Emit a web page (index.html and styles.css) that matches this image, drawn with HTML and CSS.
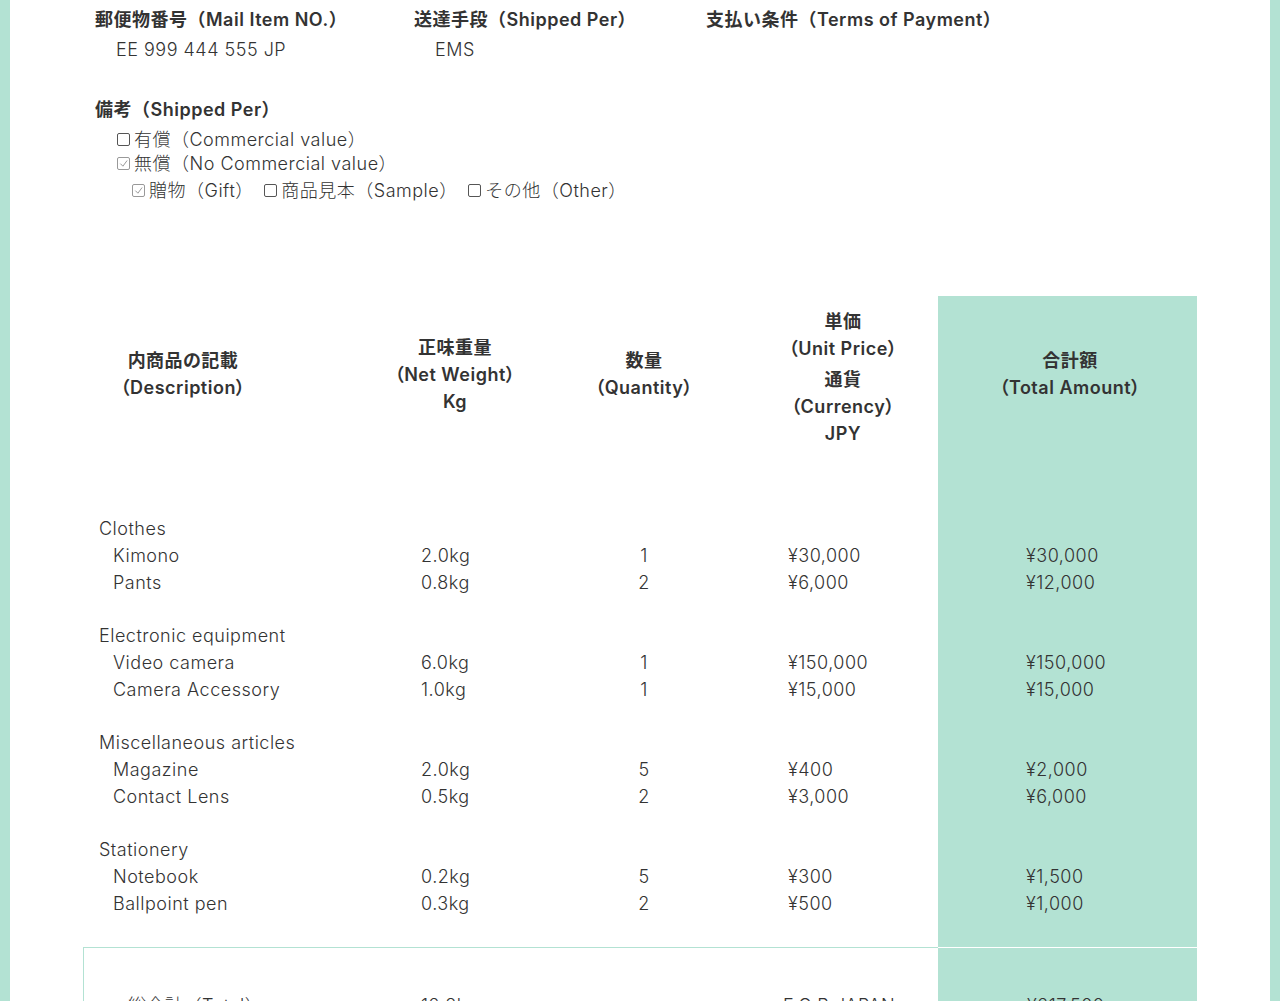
FILE: index.html
```html
<!DOCTYPE html>
<html lang="ja">
<head>
<meta charset="utf-8">
<title>Invoice</title>
<link rel="stylesheet" href="styles.css">
</head>
<body>
<div class="page">
  <section class="info">
    <div class="info-row">
      <div class="field field-mail">
        <div class="label">郵便物番号（Mail Item NO.）</div>
        <div class="value">EE 999 444 555 JP</div>
      </div>
      <div class="field field-ship">
        <div class="label">送達手段（Shipped Per）</div>
        <div class="value">EMS</div>
      </div>
      <div class="field">
        <div class="label">支払い条件（Terms of Payment）</div>
      </div>
    </div>
    <div class="remarks">
      <div class="label">備考（Shipped Per）</div>
      <div class="check-line"><span class="box"><svg viewBox="0 0 18 18" width="18" height="18"><rect x="1.5" y="2.5" width="12" height="12" rx="1.5" class="b-off"/></svg></span>有償（Commercial value）</div>
      <div class="check-line"><span class="box"><svg viewBox="0 0 18 18" width="18" height="18"><rect x="1.5" y="2.5" width="12" height="12" rx="1.5" class="b-on"/><path d="M4.6 8.9 L6.9 11.2 L10.9 5.8" class="tick"/></svg></span>無償（No Commercial value）</div>
      <div class="check-line sub">
        <span class="opt"><span class="box"><svg viewBox="0 0 18 18" width="18" height="18"><rect x="1.5" y="2.5" width="12" height="12" rx="1.5" class="b-on"/><path d="M4.6 8.9 L6.9 11.2 L10.9 5.8" class="tick"/></svg></span>贈物（Gift）</span>
        <span class="opt"><span class="box"><svg viewBox="0 0 18 18" width="18" height="18"><rect x="1.5" y="2.5" width="12" height="12" rx="1.5" class="b-off"/></svg></span>商品見本（Sample）</span>
        <span class="opt"><span class="box"><svg viewBox="0 0 18 18" width="18" height="18"><rect x="1.5" y="2.5" width="12" height="12" rx="1.5" class="b-off"/></svg></span>その他（Other）</span>
      </div>
    </div>
  </section>

  <table class="items">
    <colgroup>
      <col class="c1"><col class="c2"><col class="c3"><col class="c4"><col class="c5">
    </colgroup>
    <thead>
      <tr>
        <th class="h1">内商品の記載<br>（Description）</th>
        <th class="h2">正味重量<br>（Net Weight）<br>Kg</th>
        <th class="h3">数量<br>（Quantity）</th>
        <th class="h4"><div>単価<br>（Unit Price）</div><div class="cur">通貨<br>（Currency）<br>JPY</div></th>
        <th class="h5 total">合計額<br>（Total Amount）</th>
      </tr>
    </thead>
    <tbody>
      <tr class="group first"><td class="d1 gt">Clothes</td><td></td><td></td><td></td><td class="total"></td></tr>
      <tr><td class="d1">Kimono</td><td class="d2">2.0kg</td><td class="d3">1</td><td class="d4">¥30,000</td><td class="d5 total">¥30,000</td></tr>
      <tr><td class="d1">Pants</td><td class="d2">0.8kg</td><td class="d3">2</td><td class="d4">¥6,000</td><td class="d5 total">¥12,000</td></tr>

      <tr class="group"><td class="d1 gt">Electronic equipment</td><td></td><td></td><td></td><td class="total"></td></tr>
      <tr><td class="d1">Video camera</td><td class="d2">6.0kg</td><td class="d3">1</td><td class="d4">¥150,000</td><td class="d5 total">¥150,000</td></tr>
      <tr><td class="d1">Camera Accessory</td><td class="d2">1.0kg</td><td class="d3">1</td><td class="d4">¥15,000</td><td class="d5 total">¥15,000</td></tr>

      <tr class="group"><td class="d1 gt">Miscellaneous articles</td><td></td><td></td><td></td><td class="total"></td></tr>
      <tr><td class="d1">Magazine</td><td class="d2">2.0kg</td><td class="d3">5</td><td class="d4">¥400</td><td class="d5 total">¥2,000</td></tr>
      <tr><td class="d1">Contact Lens</td><td class="d2">0.5kg</td><td class="d3">2</td><td class="d4">¥3,000</td><td class="d5 total">¥6,000</td></tr>

      <tr class="group"><td class="d1 gt">Stationery</td><td></td><td></td><td></td><td class="total"></td></tr>
      <tr><td class="d1">Notebook</td><td class="d2">0.2kg</td><td class="d3">5</td><td class="d4">¥300</td><td class="d5 total">¥1,500</td></tr>
      <tr class="last"><td class="d1">Ballpoint pen</td><td class="d2">0.3kg</td><td class="d3">2</td><td class="d4">¥500</td><td class="d5 total">¥1,000</td></tr>
    </tbody>
    <tfoot>
      <tr>
        <td class="f1">総合計（Total）</td>
        <td class="d2">12.8kg</td>
        <td class="d3"></td>
        <td class="f4">F.O.B JAPAN</td>
        <td class="f5 total">¥217,500</td>
      </tr>
    </tfoot>
  </table>
</div>
</body>
</html>
```

FILE: styles.css
```css
html, body {
  margin: 0;
  padding: 0;
}
body {
  background: #b3e2d3;
  font-family: Inter, "Noto Sans CJK JP", sans-serif;
  font-size: 18px;
  line-height: 27px;
  letter-spacing: 0.5px;
  color: #333;
}
.page {
  margin: 0 10px;
  background: #fff;
  min-height: 1100px;
  padding-top: 6px;
}
.info {
  padding-left: 85px;
}
.info-row {
  display: flex;
}
.field-mail { width: 319px; }
.field-ship { width: 292px; }
.label {
  font-weight: 600;
  margin-bottom: 3px;
}
.value {
  padding-left: 21px;
  font-weight: 300;
}
.remarks {
  margin-top: 33px;
}
.remarks .label {
  margin-bottom: 5px;
}
.check-line {
  padding-left: 21px;
  line-height: 24px;
  font-weight: 300;
}
.check-line.sub {
  padding-left: 36px;
  margin-top: 3px;
}
.opt {
  margin-right: 4px;
}
.box {
  display: inline-block;
  width: 18px;
  height: 18px;
  vertical-align: -3px;
}
.box svg { display: block; }
.b-off { fill: none; stroke: #555; stroke-width: 1; }
.b-on { fill: none; stroke: #999; stroke-width: 1; }
.tick { fill: none; stroke: #999; stroke-width: 1; stroke-linecap: round; stroke-linejoin: round; }

.items {
  margin-top: 93px;
  margin-left: 73px;
  width: 1114px;
  table-layout: fixed;
  border-collapse: separate;
  border-spacing: 0;
}
.c1 { width: 236px; }
.c2 { width: 231px; }
.c3 { width: 188px; }
.c4 { width: 200px; }
.c5 { width: 259px; }

.items th {
  height: 150px;
  padding: 0;
  font-weight: 600;
  text-align: center;
  vertical-align: middle;
  font-feature-settings: "palt";
}
.items th.h1 { padding-right: 36px; }
.items th.h2 { padding-left: 41px; }
.items th.h4 { padding-left: 10px; padding-top: 6px; }
.items th.h5 { padding-left: 5px; }
.h4 .cur { margin-top: 4px; }

.total { background: #b3e2d3; }

.items td {
  padding: 0;
  text-align: left;
  vertical-align: top;
  font-weight: 300;
}
.items td.d1 { padding-left: 30px; }
.items td.gt { padding-left: 16px; }
.items td.d2 { padding-left: 102px; }
.items td.d3 { text-align: center; }
.items td.d4 { padding-left: 50px; }
.items td.d5 { padding-left: 88px; }

.items tr.group td { padding-top: 26px; }
.items tr.group.first td { padding-top: 63px; }
.items tr.last td { padding-bottom: 30px; }

.items tfoot td {
  border-top: 1px solid #b3e2d3;
  padding-top: 44px;
  padding-bottom: 40px;
}
.items tfoot td.total { border-top-color: #fff; }
.items tfoot td.f1 {
  border-left: 1px solid #b3e2d3;
  padding-left: 44px;
}
.items tfoot td.f4 { padding-left: 45px; }
.items tfoot td.f5 { padding-left: 89px; }
```
